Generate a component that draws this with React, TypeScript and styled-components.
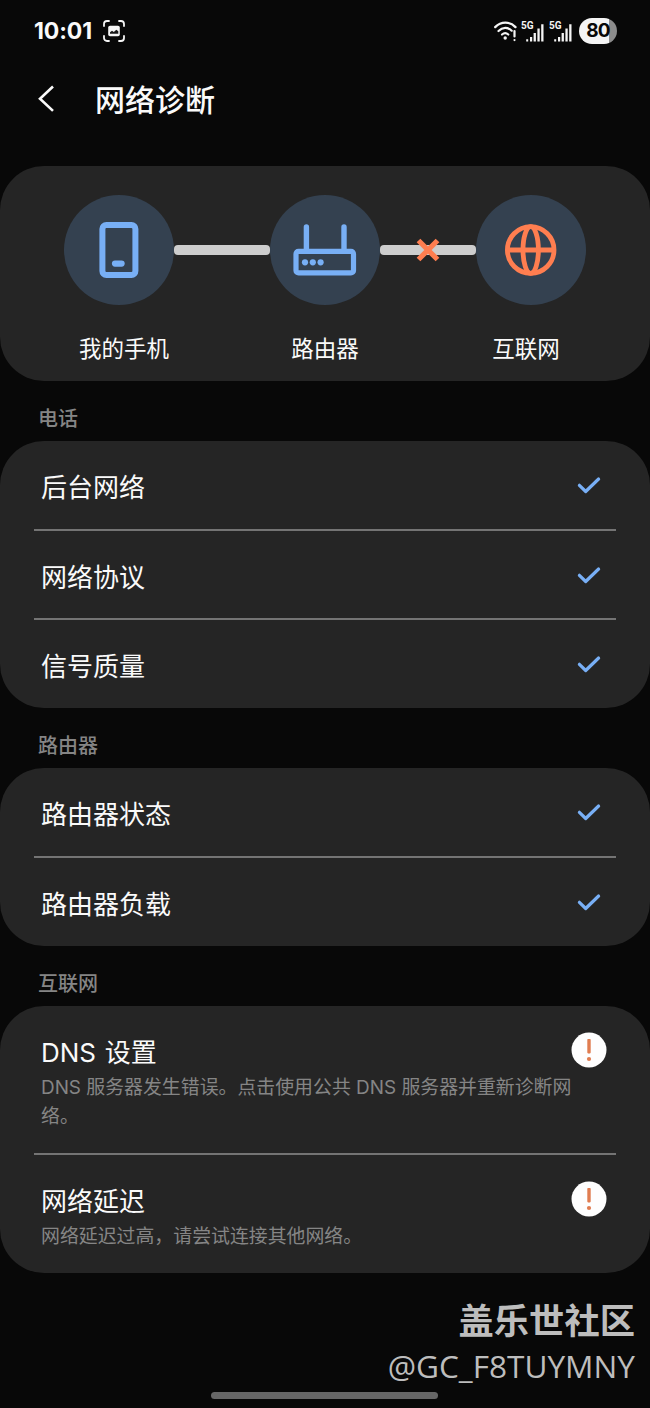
import React from 'react';
import styled, { createGlobalStyle } from 'styled-components';

const GlobalStyle = createGlobalStyle`
  * { box-sizing: border-box; }
  body { margin: 0; background: #080808; }
`;

const Screen = styled.main`
  position: relative;
  width: 650px;
  height: 1408px;
  overflow: hidden;
  background: #080808;
  color: #fafafa;
  font-family: Inter, 'Noto Sans CJK SC', sans-serif;
`;

const StatusBar = styled.header`
  display: flex;
  align-items: center;
  justify-content: space-between;
  height: 62px;
  padding: 0 33px 0 34px;
`;

const StatusGroup = styled.div<{ $gap: number }>`
  display: flex;
  align-items: center;
  gap: ${(p) => p.$gap}px;
`;

const Clock = styled.span`
  font-size: 23px;
  font-weight: 700;
  line-height: 28px;
  letter-spacing: -0.1px;
`;

const Battery = styled.div`
  display: flex;
  align-items: center;
  justify-content: center;
  width: 38px;
  height: 26px;
  margin-left: 2px;
  border-radius: 13px;
  background: linear-gradient(90deg, #f4f4f4 0 30px, #8c8c8c 30px);
  color: #080808;
  font-size: 19px;
  font-weight: 700;
  line-height: 26px;
  letter-spacing: -0.8px;
`;

const TitleBar = styled.div`
  display: flex;
  align-items: center;
  height: 104px;
  padding: 0 0 28px 36px;
`;

const Title = styled.h1`
  margin: 0 0 0 38px;
  font-size: 30px;
  font-weight: 500;
  line-height: 40px;
`;

const Card = styled.section<{ $height: number }>`
  display: flex;
  flex-direction: column;
  height: ${(p) => p.$height}px;
  border-radius: 44px;
  background: #252525;
`;

const Topology = styled(Card)`
  padding: 29px 64px 0;
`;

const Path = styled.div`
  display: flex;
  align-items: center;
`;

const NodeCircle = styled.div`
  display: flex;
  flex: none;
  align-items: center;
  justify-content: center;
  width: 110px;
  height: 110px;
  border-radius: 50%;
  background: #344150;
`;

const Link = styled.div`
  display: flex;
  flex: 1;
  align-items: center;
  justify-content: center;
  height: 10px;
  border-radius: 4px;
  background: #cdcdcd;
`;

const NodeLabels = styled.div`
  display: flex;
  justify-content: space-between;
  margin-top: 27px;
  padding: 0 5px;
`;

const NodeLabel = styled.span`
  width: 110px;
  text-align: center;
  font-size: 22.5px;
  line-height: 34px;
`;

const SectionLabel = styled.h2`
  height: 60px;
  margin: 0;
  padding: 17px 38px 0;
  color: #858585;
  font-size: 20px;
  font-weight: 500;
  line-height: 42px;
`;

const Row = styled.div<{ $height: number }>`
  display: flex;
  justify-content: space-between;
  height: ${(p) => p.$height}px;
  margin: 0 34px;
  padding: 26px 9px 0 7px;
  & + & {
    border-top: 2px solid #747474;
    padding-top: 26px;
  }
`;

const RowText = styled.div`
  flex: 1;
  min-width: 0;
`;

const RowTitle = styled.div`
  padding-top: 1px;
  font-size: 26px;
  line-height: 40px;
  word-spacing: 1.5px;
`;

const RowNote = styled.div`
  width: 540px;
  color: #858585;
  font-size: 18.9px;
  line-height: 29px;
`;

const RowIcon = styled.span<{ $top?: number }>`
  display: flex;
  flex: none;
  justify-content: center;
  width: 36px;
  margin-top: ${(p) => p.$top ?? 0}px;
`;

const Watermark = styled.div`
  position: absolute;
  right: 15px;
  bottom: 20px;
  display: flex;
  flex-direction: column;
  align-items: flex-end;
  color: #bdbdbd;
  white-space: nowrap;
`;

const Community = styled.span`
  font: 700 35.3px/50px 'Noto Sans CJK SC', sans-serif;
`;

const Author = styled.span`
  font: 400 31.6px/44px 'Open Sans', sans-serif;
`;

const HomeIndicator = styled.div`
  position: absolute;
  left: 211px;
  bottom: 9px;
  width: 227px;
  height: 7px;
  border-radius: 4px;
  background: #666;
`;

const CaptureIcon = () => (
  <svg width="22" height="22" viewBox="0 0 22 22" fill="none">
    <path d="M1 6V4a3 3 0 0 1 3-3h2M16 1h2a3 3 0 0 1 3 3v2M21 16v2a3 3 0 0 1-3 3h-2M6 21H4a3 3 0 0 1-3-3v-2" stroke="#f5f5f5" strokeWidth="1.8" strokeLinecap="round" />
    <rect x="5.2" y="5.8" width="11.6" height="10.4" rx="1.8" fill="#f5f5f5" />
    <path d="M7 13.8v-1.6l2-1.5 1.8 1.3 2.5-2.2 2 1.5v2.5z" fill="#171717" />
  </svg>
);

const WifiIcon = () => (
  <svg width="23" height="21" viewBox="0 0 23 21" fill="none" stroke="#f5f5f5" strokeLinecap="round">
    <path d="M1.2 6.1C7 .1 16 .1 21.5 6.1" strokeWidth="2.3" />
    <path d="M4.5 10c4-4 9.5-4 13.2-.3M8 13.5c2-1.7 4.4-1.7 6.3 0" strokeWidth="2.2" />
    <circle cx="11.2" cy="17" r="1.7" fill="#f5f5f5" stroke="none" />
    <path d="M20.5 10v5.5M20.5 19v.1" strokeWidth="2.2" />
  </svg>
);

const SignalIcon = () => (
  <svg width="24" height="21" viewBox="0 0 24 21" fill="#f5f5f5">
    <text x="0" y="8.2" fontSize="10" fontWeight="700" fontFamily="Roboto, sans-serif">5G</text>
    <path d="M5.2 18.2h2v2.3h-2zM9 16h2.2v4.5H9zM12.6 12h2.3v8.5h-2.3zM16.4 7.5h2.3v13h-2.3zM20.2 3.2h2.3v17.3h-2.3z" />
  </svg>
);

const BackIcon = () => (
  <svg width="21" height="30" viewBox="0 0 21 30" fill="none">
    <path d="M17 1.5 4 13.7l13 12.2" stroke="#fafafa" strokeWidth="2.6" />
  </svg>
);

const PhoneIcon = () => (
  <svg width="40" height="56" viewBox="0 0 40 56" fill="none" stroke="#78aff5">
    <rect x="3.4" y="3" width="33" height="50" rx="4" strokeWidth="6" />
    <path d="M16 41.6h6.6" strokeWidth="6.2" strokeLinecap="round" />
  </svg>
);

const RouterIcon = () => (
  <svg width="64" height="54" viewBox="0 0 64 54" fill="none" stroke="#78aff5">
    <path d="M13.4 27V4M51 27V4" strokeWidth="5.4" strokeLinecap="round" />
    <rect x="3" y="28.4" width="57.5" height="21.5" rx="2.5" strokeWidth="5.2" />
    <g fill="#78aff5" stroke="none">
      <circle cx="12" cy="39.3" r="3.1" />
      <circle cx="19.8" cy="39.3" r="3.1" />
      <circle cx="27.6" cy="39.3" r="3.1" />
    </g>
  </svg>
);

const GlobeIcon = () => (
  <svg width="52" height="52" viewBox="0 0 52 52" fill="none" stroke="#ff7e50" strokeWidth="4.8">
    <circle cx="25.7" cy="26" r="23.3" />
    <ellipse cx="25.7" cy="26" rx="7.7" ry="23.3" />
    <path d="M3 26h46" />
  </svg>
);

const BrokenIcon = () => (
  <svg width="24" height="24" viewBox="0 0 24 24" fill="none">
    <path d="m2.5 2.5 19 19m0-19-19 19" stroke="#ff7e50" strokeWidth="5.2" />
  </svg>
);

const CheckIcon = () => (
  <svg width="26" height="20" viewBox="0 0 26 20" fill="none">
    <path d="m3.4 9.3 6.3 6.2L22.6 3" stroke="#78aff5" strokeWidth="3.2" strokeLinecap="round" strokeLinejoin="round" />
  </svg>
);

const AlertIcon = () => (
  <svg width="36" height="36" viewBox="0 0 36 36">
    <circle cx="18" cy="18" r="17.5" fill="#fefefe" />
    <rect x="16.3" y="7" width="3.4" height="14.4" rx=".8" fill="#e07c50" />
    <circle cx="18" cy="27" r="2.1" fill="#e07c50" />
  </svg>
);

const CheckRow = ({ title, height }: { title: string; height: number }) => (
  <Row $height={height}>
    <RowTitle>{title}</RowTitle>
    <RowIcon $top={9}><CheckIcon /></RowIcon>
  </Row>
);

const AlertRow = ({ title, note, height }: { title: string; note: string; height: number }) => (
  <Row $height={height}>
    <RowText>
      <RowTitle>{title}</RowTitle>
      <RowNote>{note}</RowNote>
    </RowText>
    <RowIcon><AlertIcon /></RowIcon>
  </Row>
);

export default function App() {
  return (
    <Screen lang="zh-CN">
      <GlobalStyle />
      <StatusBar>
        <StatusGroup $gap={11}>
          <Clock>10:01</Clock>
          <CaptureIcon />
        </StatusGroup>
        <StatusGroup $gap={4}>
          <WifiIcon />
          <SignalIcon />
          <SignalIcon />
          <Battery>80</Battery>
        </StatusGroup>
      </StatusBar>
      <TitleBar>
        <BackIcon />
        <Title>网络诊断</Title>
      </TitleBar>
      <Topology $height={214.5}>
        <Path>
          <NodeCircle><PhoneIcon /></NodeCircle>
          <Link />
          <NodeCircle><RouterIcon /></NodeCircle>
          <Link><BrokenIcon /></Link>
          <NodeCircle><GlobeIcon /></NodeCircle>
        </Path>
        <NodeLabels>
          <NodeLabel>我的手机</NodeLabel>
          <NodeLabel>路由器</NodeLabel>
          <NodeLabel>互联网</NodeLabel>
        </NodeLabels>
      </Topology>
      <SectionLabel>电话</SectionLabel>
      <Card $height={267.5}>
        <CheckRow title="后台网络" height={88.4} />
        <CheckRow title="网络协议" height={89.5} />
        <CheckRow title="信号质量" height={89.6} />
      </Card>
      <SectionLabel>路由器</SectionLabel>
      <Card $height={178}>
        <CheckRow title="路由器状态" height={88} />
        <CheckRow title="路由器负载" height={90} />
      </Card>
      <SectionLabel>互联网</SectionLabel>
      <Card $height={267}>
        <AlertRow title="DNS 设置" note="DNS 服务器发生错误。点击使用公共 DNS 服务器并重新诊断网络。" height={147} />
        <AlertRow title="网络延迟" note="网络延迟过高，请尝试连接其他网络。" height={120} />
      </Card>
      <Watermark>
        <Community>盖乐世社区</Community>
        <Author>@GC_F8TUYMNY</Author>
      </Watermark>
      <HomeIndicator />
    </Screen>
  );
}
